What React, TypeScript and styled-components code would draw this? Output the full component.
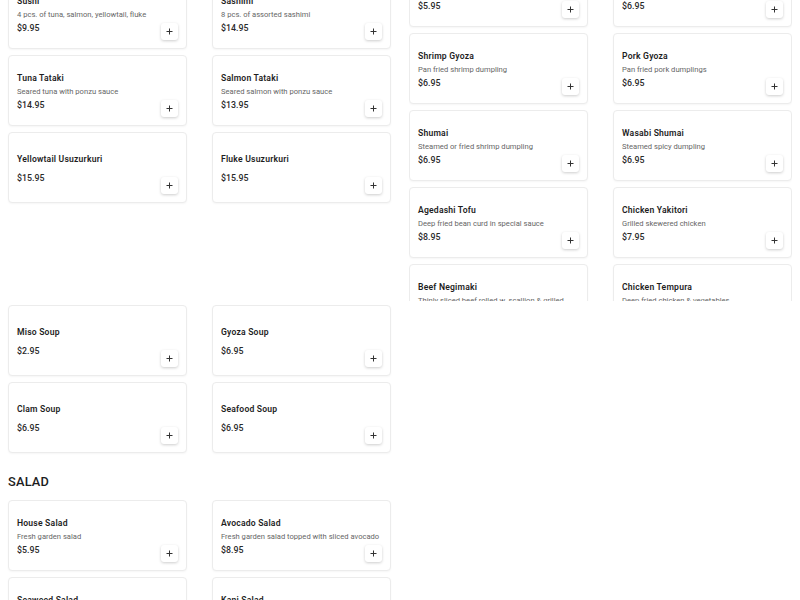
import React, {useLayoutEffect, useRef} from 'react';
import styled, {createGlobalStyle} from 'styled-components';

const GlobalStyle = createGlobalStyle`
  html, body {
    margin: 0;
    padding: 0;
    background: #ffffff;
    font-family: Roboto, "Liberation Sans", Arial, sans-serif;
    color: #222222;
  }
  * { box-sizing: border-box; }
`;

type Item = {name: string; desc?: string; price: string};

const sushiBar: Item[] = [
  {name: 'Sushi', desc: '4 pcs. of tuna, salmon, yellowtail, fluke', price: '$9.95'},
  {name: 'Sashimi', desc: '8 pcs. of assorted sashimi', price: '$14.95'},
  {name: 'Tuna Tataki', desc: 'Seared tuna with ponzu sauce', price: '$14.95'},
  {name: 'Salmon Tataki', desc: 'Seared salmon with ponzu sauce', price: '$13.95'},
  {name: 'Yellowtail Usuzurkuri', price: '$15.95'},
  {name: 'Fluke Usuzurkuri', price: '$15.95'},
];

const appetizers: Item[] = [
  {name: 'Edamame', desc: 'Steamed soy beans', price: '$4.95'},
  {name: 'Seaweed Salad', desc: 'Marinated seaweed', price: '$5.95'},
  {name: 'Vegetable Gyoza', desc: 'Pan fried vegetable dumplings', price: '$5.95'},
  {name: 'Chicken Gyoza', desc: 'Pan fried chicken dumplings', price: '$6.95'},
  {name: 'Shrimp Gyoza', desc: 'Pan fried shrimp dumpling', price: '$6.95'},
  {name: 'Pork Gyoza', desc: 'Pan fried pork dumplings', price: '$6.95'},
  {name: 'Shumai', desc: 'Steamed or fried shrimp dumpling', price: '$6.95'},
  {name: 'Wasabi Shumai', desc: 'Steamed spicy dumpling', price: '$6.95'},
  {name: 'Agedashi Tofu', desc: 'Deep fried bean curd in special sauce', price: '$8.95'},
  {name: 'Chicken Yakitori', desc: 'Grilled skewered chicken', price: '$7.95'},
  {name: 'Beef Negimaki', desc: 'Thinly sliced beef rolled w. scallion & grilled', price: '$9.95'},
  {name: 'Chicken Tempura', desc: 'Deep fried chicken & vegetables', price: '$8.95'},
];

const soups: Item[] = [
  {name: 'Miso Soup', price: '$2.95'},
  {name: 'Gyoza Soup', price: '$6.95'},
  {name: 'Clam Soup', price: '$6.95'},
  {name: 'Seafood Soup', price: '$6.95'},
];

const salads: Item[] = [
  {name: 'House Salad', desc: 'Fresh garden salad', price: '$5.95'},
  {name: 'Avocado Salad', desc: 'Fresh garden salad topped with sliced avocado', price: '$8.95'},
  {name: 'Seaweed Salad', desc: 'Marinated seaweed', price: '$5.95'},
  {name: 'Kani Salad', desc: 'Crab stick, cucumber & spicy mayo', price: '$7.95'},
];

const Viewport = styled.div`
  height: 100vh;
  overflow: hidden;
`;

const Page = styled.main`
  padding: 8px;
`;

const TopGrid = styled.div`
  display: grid;
  grid-template-columns: 383px 383px;
  column-gap: 18px;
  align-items: start;
`;

const Section = styled.section<{$gap?: number}>`
  margin-top: ${p => p.$gap ?? 0}px;
  width: 383px;
`;

const Panel = styled.div`
  height: 349px;
  overflow: hidden;
`;

const Heading = styled.h2<{$top?: number}>`
  margin: ${p => p.$top ?? 0}px 0 10px;
  font-size: 12.8px;
  line-height: 16px;
  font-weight: 500;
  letter-spacing: 0.2px;
  color: #1d1d1d;
`;

const Cards = styled.div`
  display: grid;
  grid-template-columns: 179px 179px;
  column-gap: 25px;
  row-gap: 6px;
`;

const Card = styled.div`
  height: 71px;
  display: flex;
  align-items: center;
  justify-content: space-between;
  padding: 2px 8px 0;
  background: #ffffff;
  border: 1px solid #ececec;
  border-radius: 4px;
  box-shadow: 0 1px 2px rgba(0, 0, 0, 0.04);
`;

const Info = styled.div`
  display: flex;
  flex-direction: column;
  min-width: 0;
`;

const Title = styled.div`
  font-size: 8.6px;
  line-height: 13px;
  font-weight: 600;
  letter-spacing: 0.2px;
  color: #1e1e1e;
  white-space: nowrap;
`;

const Desc = styled.div`
  font-size: 7.6px;
  line-height: 13px;
  color: #666666;
  white-space: nowrap;
`;

const Price = styled.div<{$gap: number}>`
  margin-top: ${p => p.$gap}px;
  font-size: 8.8px;
  line-height: 14px;
  font-weight: 500;
  color: #2a2a2a;
`;

const AddButton = styled.button`
  align-self: flex-end;
  margin-bottom: 8px;
  width: 17px;
  height: 17px;
  flex-shrink: 0;
  padding: 0;
  display: flex;
  align-items: center;
  justify-content: center;
  background: #ffffff;
  border: none;
  border-radius: 3px;
  box-shadow: 0 1px 3px rgba(0, 0, 0, 0.2);
  cursor: pointer;
`;

const PlusIcon = () => (
  <svg width="7" height="7" viewBox="0 0 7 7">
    <path d="M3.5 0.5v6M0.5 3.5h6" stroke="#333" strokeWidth="1" fill="none" />
  </svg>
);

const MenuCard = ({item}: {item: Item}) => (
  <Card>
    <Info>
      <Title>{item.name}</Title>
      {item.desc && <Desc>{item.desc}</Desc>}
      <Price $gap={item.desc ? 0 : 5}>{item.price}</Price>
    </Info>
    <AddButton aria-label={`Add ${item.name}`}>
      <PlusIcon />
    </AddButton>
  </Card>
);

const CardList = ({items}: {items: Item[]}) => (
  <Cards>
    {items.map(item => (
      <MenuCard key={item.name} item={item} />
    ))}
  </Cards>
);

const App = () => {
  const pageRef = useRef<HTMLDivElement>(null);
  const panelRef = useRef<HTMLDivElement>(null);

  useLayoutEffect(() => {
    if (pageRef.current) pageRef.current.scrollTop = 56;
    if (panelRef.current) panelRef.current.scrollTop = 99;
  }, []);

  return (
    <Viewport ref={pageRef}>
      <GlobalStyle />
      <Page>
        <TopGrid>
          <Section>
            <Heading>SUSHI BAR</Heading>
            <CardList items={sushiBar} />
          </Section>
          <Panel ref={panelRef}>
            <Heading>APPETIZERS</Heading>
            <CardList items={appetizers} />
          </Panel>
        </TopGrid>
        <Section $gap={4}>
          <CardList items={soups} />
        </Section>
        <Section>
          <Heading $top={21}>SALAD</Heading>
          <CardList items={salads} />
        </Section>
      </Page>
    </Viewport>
  );
};

export default App;
